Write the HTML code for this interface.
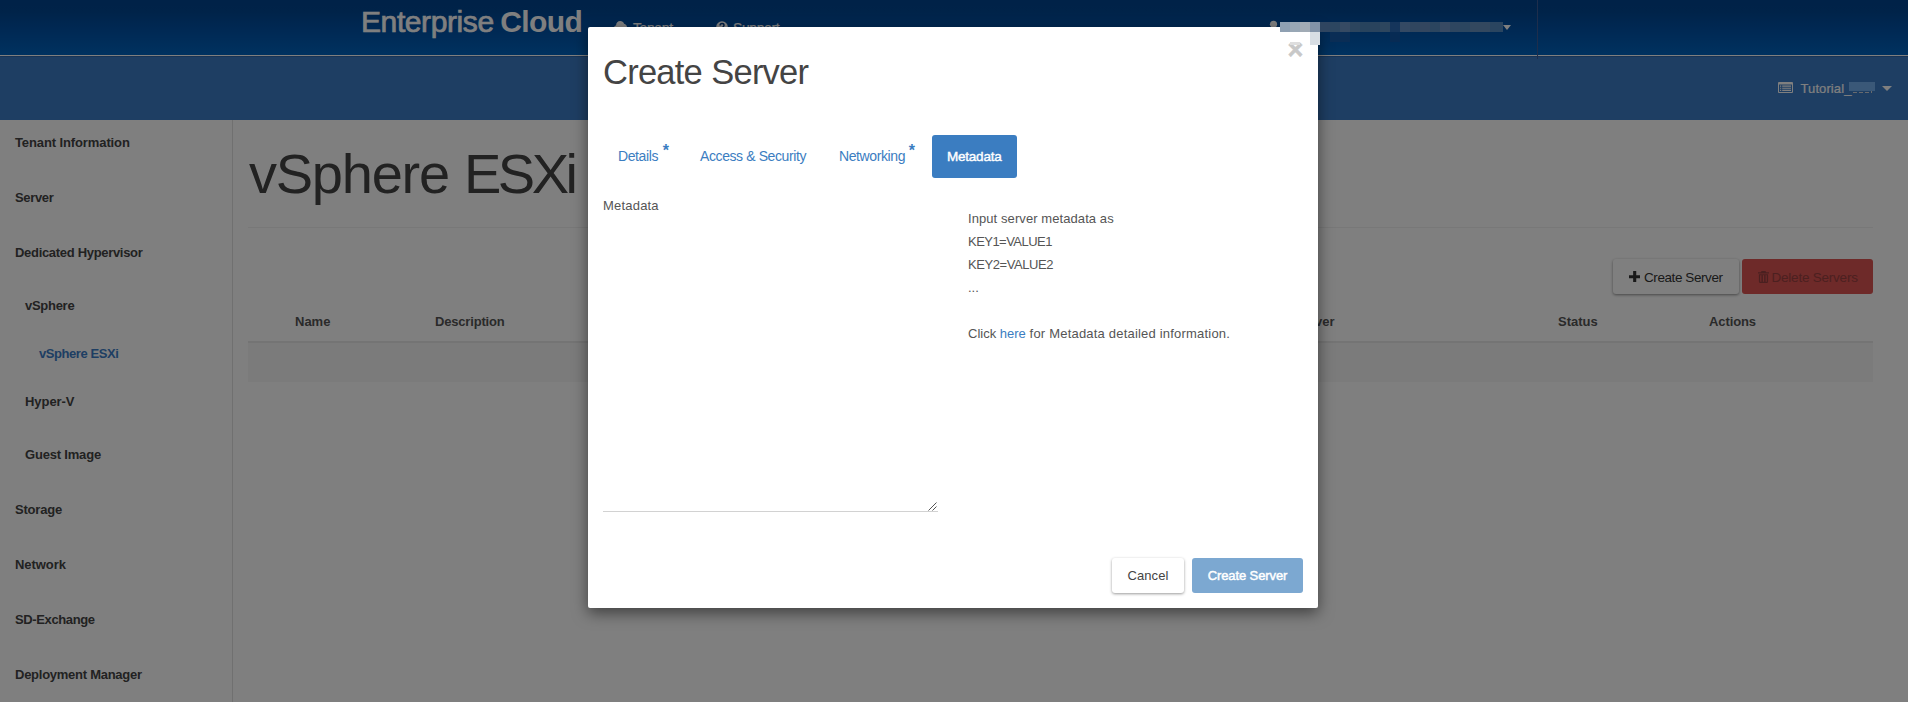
<!DOCTYPE html>
<html lang="en">
<head>
<meta charset="utf-8">
<title>Create Server - Enterprise Cloud</title>
<style>
*{box-sizing:border-box;margin:0;padding:0}
html,body{width:1908px;height:702px;overflow:hidden;background:#fff;font-family:"Liberation Sans",sans-serif;font-size:13px;color:#333}
.abs{position:absolute;white-space:nowrap}
#page{position:absolute;left:0;top:0;width:1908px;height:702px;overflow:hidden;background:#fff}
/* header */
#topbar{position:absolute;left:0;top:0;width:1908px;height:55px;background:linear-gradient(#004490,#004692 20%,#0052a8 55%,#0064c0)}
#topline{position:absolute;left:0;top:55px;width:1908px;height:1px;background:#fff}
#subbar{position:absolute;left:0;top:56px;width:1908px;height:64px;background:#3c7cc6;border-top:1px solid #3068ac}
#vdiv{position:absolute;left:1537px;top:0;width:1px;height:59px;background:#3c5c98}
#logo{left:361px;top:4px;font-size:30px;line-height:36px;color:#fff;letter-spacing:-.4px;word-spacing:-1.5px}
#logo b{letter-spacing:-.55px}
#logo span{-webkit-text-stroke:.7px #fff}
.nav{color:#fff;font-size:14px;line-height:16px;letter-spacing:-.4px;-webkit-text-stroke:.2px #fff}
/* sidebar */
#side{position:absolute;left:0;top:120px;width:233px;height:582px;border-right:1px solid #e0e0e0;background:#fff}
.sb{font-weight:bold;font-size:13px;line-height:16px;color:#444}
.sb.act{color:#3c7cc6}
/* content */
#h1{left:249px;top:138px;font-size:56px;line-height:72px;color:#444;font-weight:normal;letter-spacing:-2px}
#hr{position:absolute;left:248px;top:227px;width:1625px;height:1px;background:#f0f0f0}
.th{font-weight:bold;font-size:13px;line-height:16px;color:#555}
#thline{position:absolute;left:248px;top:341px;width:1625px;height:2px;background:#e8e8e8}
#row{position:absolute;left:248px;top:343px;width:1625px;height:39px;background:#f7f7f7}
.btn{position:absolute;height:35px;border-radius:3px;font-size:14px;line-height:35px;white-space:nowrap}
#bcreate{left:1613px;top:259px;width:126px;background:#fff;color:#333;box-shadow:0 1px 3px rgba(0,0,0,.45)}
#bdelete{left:1742px;top:259px;width:131px;background:#dc5452;color:#984040}
/* overlay + modal */
#ov{position:absolute;left:0;top:0;width:1908px;height:702px;background:rgba(0,0,0,.5)}
#modal{position:absolute;left:588px;top:27px;width:730px;height:581px;background:#fff;border-radius:2px;box-shadow:0 5px 15px rgba(0,0,0,.5)}
#mt{left:15px;top:21px;font-size:34.5px;line-height:48px;color:#444;letter-spacing:-.76px;word-spacing:.4px}
.tab{font-size:14px;line-height:20px;color:#3b7dc1;letter-spacing:-.4px}
.ast{font-size:16px;font-weight:bold;letter-spacing:0}
#pill{position:absolute;left:344px;top:108px;width:85px;height:43px;border-radius:3px;background:#3b7dc1;color:#fff;font-size:13.5px;line-height:43.5px;text-align:center;-webkit-text-stroke:.4px #fff;letter-spacing:-.2px;padding-right:.5px}
.mtx{font-size:13px;line-height:23px;color:#555}
#close{left:699.6px;top:8.2px;font-size:27px;line-height:30px;font-weight:bold;color:#c8c8c8;-webkit-text-stroke:.5px #c8c8c8}
#mosaic i{position:absolute;display:block}
#ta{position:absolute;left:15px;top:195px;width:335px;height:290px;border-bottom:1px solid #d2d2d2}
#bcancel{left:524px;top:531px;width:72px;background:#fff;color:#444;text-align:center;box-shadow:0 1px 3px rgba(0,0,0,.4);font-size:13px;line-height:36px;letter-spacing:.1px}
#bsubmit{left:604px;top:531px;width:111px;background:#7ca8d1;color:#fff;text-align:center;font-size:13px;line-height:36px;-webkit-text-stroke:.45px #fff;letter-spacing:-.1px}
</style>
</head>
<body>
<div id="page">
  <div id="topbar"></div>
  <div id="topline"></div>
  <div id="subbar"></div>
  <div id="vdiv"></div>
  <div id="logo" class="abs"><span>Enterprise</span> <b>Cloud</b></div>
  <svg class="abs" style="left:614px;top:20px" width="13" height="12" viewBox="0 0 13 12"><path fill="#fff" d="M3.2 11C1.4 11 0 9.700 0 8.100C0 6.800 .9 5.700 2.100 5.300C2.100 2.900 3.900 1 6.200 1C8 1 9.500 2.100 10.100 3.700C11.700 3.900 13 5.400 13 7.200C13 9.300 11.400 11 9.400 11Z"/></svg>
  <div class="abs nav" style="left:633px;top:20px">Tenant</div>
  <svg class="abs" style="left:716px;top:21px" width="12" height="12" viewBox="0 0 12 12"><circle cx="6" cy="6" r="5.8" fill="#fff"/><path d="M4.100 4.500C4.100 3.300 5 2.600 6.100 2.600C7.200 2.600 8 3.300 8 4.300C8 5.700 6.500 5.800 6.500 7.200" fill="none" stroke="#003c88" stroke-width="1.500"/><circle cx="6.500" cy="9.100" r=".9" fill="#003c88"/></svg>
  <div class="abs nav" style="left:733px;top:20px">Support</div>
  <svg class="abs" style="left:1268px;top:20px" width="12" height="13" viewBox="0 0 12 13"><circle cx="5.500" cy="4.300" r="3.600" fill="#fff"/><path fill="#fff" d="M0 13C0 9.500 2.200 8 5.500 8C8.800 8 11 9.500 11 13Z"/></svg>
  <svg class="abs" style="left:1503px;top:25px" width="8" height="5" viewBox="0 0 8 5"><path fill="#fff" d="M0 0H8L4 5Z"/></svg>
  <svg class="abs" style="left:1778px;top:82px" width="15" height="11" viewBox="0 0 15 11"><path fill="#fff" fill-rule="evenodd" d="M1 0H14Q15 0 15 1V10Q15 11 14 11H1Q0 11 0 10V1Q0 0 1 0ZM1 2.500V10H14V2.500ZM2 3.600H3.200V4.700H2ZM4.200 3.600H13V4.700H4.200ZM2 5.700H3.200V6.800H2ZM4.200 5.700H13V6.800H4.200ZM2 7.800H3.200V8.900H2ZM4.200 7.800H13V8.900H4.200Z"/></svg>
  <div class="abs nav" style="left:1800.5px;top:80.5px;font-size:13px;letter-spacing:.1px">Tutorial_</div>
  <div class="abs" style="left:1849px;top:82px;width:26px;height:9.4px;background:#74b0f0"></div><div class="abs" style="left:1853px;top:92px;width:4px;height:1px;background:#d0d4dc;box-shadow:6px 0 0 #d0d4dc,12px 0 0 #d0d4dc"></div><div class="abs" style="left:1871px;top:91px;width:1px;height:2px;background:#d0d4dc"></div>
  <svg class="abs" style="left:1882px;top:86px" width="10" height="5" viewBox="0 0 10 5"><path fill="#fff" d="M0 0H10L5 5Z"/></svg>

  <div id="side">
    <div class="abs sb" style="left:15px;top:14.7px;letter-spacing:-0.11px">Tenant Information</div>
    <div class="abs sb" style="left:15px;top:69.7px;letter-spacing:-0.33px">Server</div>
    <div class="abs sb" style="left:15px;top:124.7px;letter-spacing:-0.31px">Dedicated Hypervisor</div>
    <div class="abs sb" style="left:25px;top:177.7px;letter-spacing:-0.28px">vSphere</div>
    <div class="abs sb act" style="left:39px;top:225.7px;letter-spacing:-0.43px">vSphere ESXi</div>
    <div class="abs sb" style="left:25px;top:273.7px;letter-spacing:-0.06px">Hyper-V</div>
    <div class="abs sb" style="left:25px;top:326.7px;letter-spacing:-0.19px">Guest Image</div>
    <div class="abs sb" style="left:15px;top:381.7px;letter-spacing:-0.19px">Storage</div>
    <div class="abs sb" style="left:15px;top:436.7px;letter-spacing:-0.06px">Network</div>
    <div class="abs sb" style="left:15px;top:491.7px;letter-spacing:-0.37px">SD-Exchange</div>
    <div class="abs sb" style="left:15px;top:546.7px;letter-spacing:-0.26px">Deployment Manager</div>
  </div>

  <div id="h1" class="abs"><span style="letter-spacing:-1.25px">vSphere</span><span class="abs" style="left:215px;letter-spacing:-3.5px">ESXi</span></div>
  <div id="hr"></div>
  <div id="bcreate" class="btn"><svg class="abs" style="left:16px;top:11.6px" width="11.4" height="11.4" viewBox="0 0 11 11"><path fill="#333" d="M4 0H7V4H11V7H7V11H4V7H0V4H4Z"/></svg><span class="abs" style="left:31px;top:1px;font-size:13.5px;letter-spacing:-.42px">Create Server</span></div>
  <div id="bdelete" class="btn"><svg class="abs" style="left:16.4px;top:11.5px" width="11" height="12" viewBox="0 0 11 12"><path fill="#944040" fill-rule="evenodd" d="M3.600 0H7.400L8.200 1.300H11V2.600H0V1.300H2.800ZM.9 3.300H10.100V10.500Q10.100 12 8.600 12H2.400Q.9 12 .9 10.500ZM2.200 4.300V10.700H3.400V4.300ZM4.900 4.300V10.700H6.100V4.300ZM7.600 4.300V10.700H8.800V4.300Z"/></svg><span class="abs" style="left:29.5px;top:1px;font-size:13.5px;letter-spacing:-.22px">Delete Servers</span></div>
  <div class="abs th" style="left:295px;top:314px">Name</div>
  <div class="abs th" style="left:435px;top:314px;letter-spacing:-.18px">Description</div>
  <div class="abs th" style="left:1294px;top:314px">Server</div>
  <div class="abs th" style="left:1558px;top:314px">Status</div>
  <div class="abs th" style="left:1709px;top:314px;letter-spacing:-.1px">Actions</div>
  <div id="thline"></div>
  <div id="row"></div>

  <div id="ov"></div>

  <div id="modal">
    <div id="mt" class="abs">Create Server</div>
    <div class="abs tab" style="left:30px;top:119px">Details</div>
    <div class="abs tab" style="left:112px;top:119px">Access &amp; Security</div>
    <div class="abs tab" style="left:251px;top:119px">Networking</div>
    <div class="abs tab ast" style="left:74.7px;top:114.4px">*</div>
    <div class="abs tab ast" style="left:320.8px;top:114.4px">*</div>
    <div id="close" class="abs">&times;</div>
    <div id="pill">Metadata</div>
    <div class="abs mtx" style="left:15px;top:167px;letter-spacing:.2px">Metadata</div>
    <div id="ta"><svg class="abs" style="right:1px;bottom:0" width="9" height="9" viewBox="0 0 9 9"><path d="M8.500 .5L.5 8.500M8.500 4.500L4.500 8.500" stroke="#555" stroke-width="1" fill="none"/></svg></div>
    <div class="abs mtx" style="left:380px;top:180px;letter-spacing:.08px">Input server metadata as</div>
    <div class="abs mtx" style="left:380px;top:203px;letter-spacing:-.53px">KEY1=VALUE1</div>
    <div class="abs mtx" style="left:380px;top:226px;letter-spacing:-.42px">KEY2=VALUE2</div>
    <div class="abs mtx" style="left:380px;top:249px">...</div>
    <div class="abs mtx" style="left:380px;top:295px">Click <span style="color:#3b7dc1">here</span><span style="letter-spacing:.2px"> for Metadata detailed information.</span></div>
    <div id="bcancel" class="btn">Cancel</div>
    <div id="bsubmit" class="btn">Create Server</div>
  </div>
  <div id="mosaic"><i style="left:1280px;top:22px;width:10px;height:10px;background:#8fa0b2"></i><i style="left:1290px;top:22px;width:10px;height:10px;background:#98a7b5"></i><i style="left:1300px;top:22px;width:10px;height:10px;background:#a1abb5"></i><i style="left:1310px;top:22px;width:10px;height:10px;background:#8293a8"></i><i style="left:1320px;top:22px;width:10px;height:10px;background:#2f4560"></i><i style="left:1330px;top:22px;width:10px;height:10px;background:#2c4660"></i><i style="left:1340px;top:22px;width:10px;height:10px;background:#364a63"></i><i style="left:1350px;top:22px;width:10px;height:10px;background:#2c455e"></i><i style="left:1360px;top:22px;width:10px;height:10px;background:#27435d"></i><i style="left:1370px;top:22px;width:10px;height:10px;background:#29435d"></i><i style="left:1380px;top:22px;width:10px;height:10px;background:#2d465e"></i><i style="left:1390px;top:22px;width:10px;height:10px;background:#15355b"></i><i style="left:1400px;top:22px;width:10px;height:10px;background:#344963"></i><i style="left:1410px;top:22px;width:10px;height:10px;background:#30465f"></i><i style="left:1420px;top:22px;width:10px;height:10px;background:#33465f"></i><i style="left:1430px;top:22px;width:10px;height:10px;background:#2b455f"></i><i style="left:1440px;top:22px;width:10px;height:10px;background:#384a63"></i><i style="left:1450px;top:22px;width:10px;height:10px;background:#2e4660"></i><i style="left:1460px;top:22px;width:10px;height:10px;background:#2b4660"></i><i style="left:1470px;top:22px;width:10px;height:10px;background:#33485f"></i><i style="left:1480px;top:22px;width:10px;height:10px;background:#33485f"></i><i style="left:1490px;top:22px;width:10px;height:10px;background:#2a4560"></i><i style="left:1500px;top:22px;width:3px;height:10px;background:#2a4560"></i><i style="left:1310px;top:32px;width:10px;height:13px;background:#d8dee4"></i><i style="left:1290px;top:42px;width:10px;height:3px;background:#dedede"></i><i style="left:1330px;top:32px;width:20px;height:10px;background:#0a2d55"></i><i style="left:1390px;top:32px;width:10px;height:10px;background:#072b54"></i></div>
</div>
</body>
</html>
